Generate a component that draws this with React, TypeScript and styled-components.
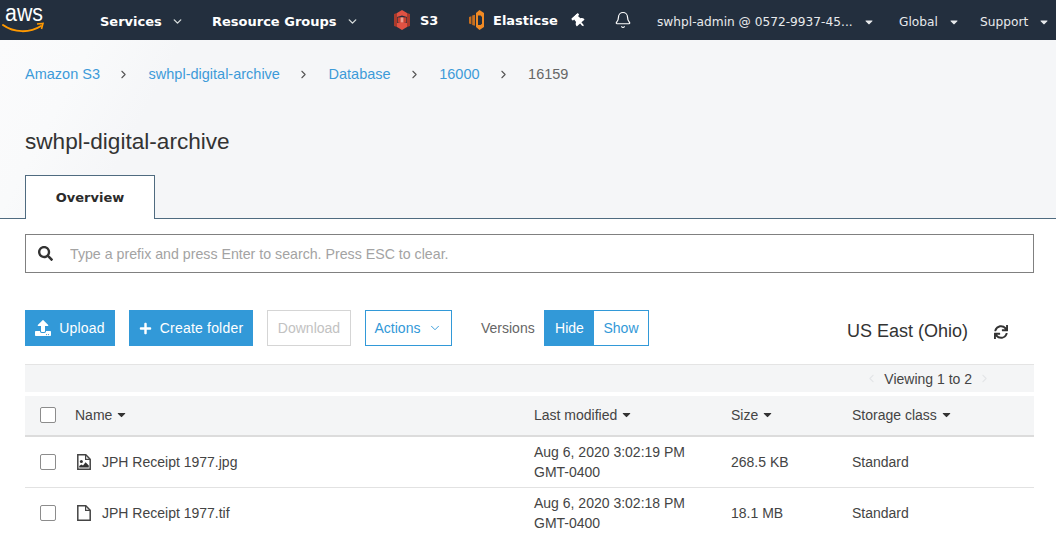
import styled, { createGlobalStyle } from "styled-components";
import { Bell, ChevronDown, ChevronLeft, ChevronRight } from "lucide-react";
import { FaCaretDown, FaPlus, FaSearch, FaSync, FaThumbtack, FaUpload } from "react-icons/fa";

const crumbs = ["Amazon S3", "swhpl-digital-archive", "Database", "16000"];

const files = [
    { name: "JPH Receipt 1977.jpg", date: "Aug 6, 2020 3:02:19 PM", size: "268.5 KB", image: true },
    { name: "JPH Receipt 1977.tif", date: "Aug 6, 2020 3:02:18 PM", size: "18.1 MB", image: false },
];

const FileIcon = ({ image }: { image: boolean }) => (
    <svg viewBox="0 0 14 16" width="14" height="16">
        <path d="M.8.8h8l4.4 4.4v10H.8z" fill="#fff" stroke="#444" strokeWidth="1.5" />
        <path d="M8.6 1v4.4h4.4" fill="none" stroke="#444" strokeWidth="1.2" />
        {image && (
            <>
                <circle cx="4.4" cy="7.4" r="1.5" fill="#333" />
                <path d="M2.2 13.6v-1.6l2.2-1.6 1.6 1 2.6-3.2 3.2 3.2v2.2z" fill="#333" />
            </>
        )}
    </svg>
);

const App = () => (
    <>
        <GlobalStyle />
        <Page>
            <Nav>
                <Logo>
                    <svg viewBox="0 0 56 34" width="56" height="34">
                        <text x="5" y="21" textLength="38" lengthAdjust="spacingAndGlyphs" fontFamily="'Liberation Sans', sans-serif" fontSize="23" fill="#fff">aws</text>
                        <path d="M3 25c11 8 27 8 38 1" fill="none" stroke="#f90" strokeWidth="2" strokeLinecap="round" />
                        <path d="M37 24l6-.5-1.5 5.5" fill="none" stroke="#f90" strokeWidth="1.6" />
                    </svg>
                </Logo>
                <NavMenu $width={112}>Services <ChevronDown size={13} strokeWidth={2.6} /></NavMenu>
                <NavMenu $width={178}>Resource Groups <ChevronDown size={13} strokeWidth={2.6} /></NavMenu>
                <Shortcut $width={78} $inset={4}>
                    <svg viewBox="0 0 16 20" width="16" height="20">
                        <path d="M0 4l3-1v14l-3-1zM16 4l-3-1v14l3-1z" fill="#a93a2b" />
                        <path d="M3 3l5-3 5 3v4L8 5.6 3 7zM3 13l5-1.4L13 13v4l-5 3-5-3z" fill="#e05243" />
                        <rect x="3.6" y="7.4" width="8.8" height="5" fill="#c9402f" />
                        <rect x="6.6" y="7.4" width="2.8" height="5" fill="#eb9c90" />
                    </svg>
                    S3
                </Shortcut>
                <Shortcut $width={104} $inset={1}>
                    <svg viewBox="0 0 15 20" width="15" height="20">
                        <path d="M0 7l2.4-.8v8L0 13.6zM3.2 5.6L6 4.8v11l-2.8-.8z" fill="#c96f1e" />
                        <path d="M7 3l3.5-3L15 3v14l-4.5 3L7 17z" fill="#f08a24" />
                        <path d="M9 5.5h2.6L13 7v6.4L11.6 15H9z" fill="#232f3e" />
                    </svg>
                    <ShortcutLabel>Elasticse</ShortcutLabel>
                </Shortcut>
                <PinSlot><FaThumbtack size={14} /></PinSlot>
                <BellSlot><Bell size={18} strokeWidth={1.6} /></BellSlot>
                <AccountMenu $width={242}>swhpl-admin @ 0572-9937-45... <FaCaretDown size={12} /></AccountMenu>
                <AccountMenu $width={81}>Global <FaCaretDown size={12} /></AccountMenu>
                <AccountMenu $width={76}>Support <FaCaretDown size={12} /></AccountMenu>
            </Nav>

            <Hero>
                <Breadcrumbs>
                    {crumbs.map(c => (
                        <Crumb key={c}>
                            <CrumbLink>{c}</CrumbLink>
                            <ChevronRight size={13} strokeWidth={2} />
                        </Crumb>
                    ))}
                    <CrumbCurrent>16159</CrumbCurrent>
                </Breadcrumbs>
                <Title>swhpl-digital-archive</Title>
                <Tab>Overview</Tab>
            </Hero>

            <Content>
                <SearchBox>
                    <FaSearch size={15} />
                    <SearchInput placeholder="Type a prefix and press Enter to search. Press ESC to clear." />
                </SearchBox>

                <Toolbar>
                    <PrimaryButton $width={90}><FaUpload size={16} /> Upload</PrimaryButton>
                    <PrimaryButton $width={124}><FaPlus size={13} /> Create folder</PrimaryButton>
                    <DisabledButton>Download</DisabledButton>
                    <OutlineButton>Actions <ChevronDown size={14} strokeWidth={1.6} /></OutlineButton>
                    <VersionsLabel>Versions</VersionsLabel>
                    <Toggle>
                        <ToggleItem $active>Hide</ToggleItem>
                        <ToggleItem>Show</ToggleItem>
                    </Toggle>
                    <Region>US East (Ohio)</Region>
                    <RefreshIcon><FaSync size={14} /></RefreshIcon>
                </Toolbar>

                <PagerBar>
                    <ChevronLeft size={13} color="#e4e6e8" />
                    <span>Viewing 1 to 2</span>
                    <ChevronRight size={13} color="#e4e6e8" />
                </PagerBar>

                <HeaderRow>
                    <CheckCell><Checkbox /></CheckCell>
                    <HeadCell>Name <FaCaretDown size={13} /></HeadCell>
                    <HeadCell>Last modified <FaCaretDown size={13} /></HeadCell>
                    <HeadCell>Size <FaCaretDown size={13} /></HeadCell>
                    <HeadCell>Storage class <FaCaretDown size={13} /></HeadCell>
                </HeaderRow>

                {files.map(f => (
                    <FileRow key={f.name}>
                        <CheckCell><Checkbox /></CheckCell>
                        <NameCell>
                            <FileIcon image={f.image} />
                            {f.name}
                        </NameCell>
                        <DateCell>{f.date}<br />GMT-0400</DateCell>
                        <div>{f.size}</div>
                        <div>Standard</div>
                    </FileRow>
                ))}
            </Content>
        </Page>
    </>
);

const GlobalStyle = createGlobalStyle`
    html, body { margin: 0; padding: 0; background: #fff; }
    * { box-sizing: border-box; }
`;

const Page = styled.div`
    width: 1056px; height: 544px; overflow: hidden;
    font-family: "Liberation Sans", Arial, sans-serif;
    font-size: 14px; color: #444;
`;

// ─── Nav ──────────────────────────────────────────────────────────────────────
const Nav = styled.div`
    display: flex; align-items: center;
    height: 40px; background: #232f3e; color: #fff;
    font-family: "DejaVu Sans", Verdana, sans-serif;
    white-space: nowrap;
`;
const Logo = styled.div`width: 100px; height: 40px; svg { display: block; }`;
const NavMenu = styled.div<{ $width: number }>`
    display: flex; align-items: center; gap: 9px;
    width: ${p => p.$width}px; padding-top: 2px;
    font-size: 13px; font-weight: 700;
    svg { color: #d5dbdb; }
`;
const Shortcut = styled.div<{ $width: number; $inset: number }>`
    display: flex; align-items: center; gap: 10px;
    width: ${p => p.$width}px; padding-left: ${p => p.$inset}px;
    font-size: 13px; font-weight: 700;
    svg { flex: none; }
`;
const ShortcutLabel = styled.span`margin-left: -1px;`;
const PinSlot = styled.div`display: flex; width: 42px; padding-top: 1px; svg { transform: rotate(-42deg); }`;
const BellSlot = styled.div`display: flex; width: 43px;`;
const AccountMenu = styled.div<{ $width: number }>`
    display: flex; align-items: center; gap: 10px;
    width: ${p => p.$width}px; padding-top: 3px;
    font-size: 12.2px; color: #e8eaec;
`;

// ─── Hero ─────────────────────────────────────────────────────────────────────
const Hero = styled.div`
    height: 179px; padding: 25px 0 0 25px;
    background: linear-gradient(118deg, #fbfbfc 0, #f9fafb 8%, #f5f6f8 16%);
    border-bottom: 1px solid #4f6b80;
`;
const Breadcrumbs = styled.div`display: flex; align-items: center; height: 18px; font-size: 14.5px;`;
const Crumb = styled.div`
    display: flex; align-items: center; gap: 17px; margin-right: 18.6px;
    svg { color: #555; }
`;
const CrumbLink = styled.span`color: #3d9bd9;`;
const CrumbCurrent = styled.span`color: #666;`;
const Title = styled.h1`margin: 43px 0 0; font-size: 22.6px; line-height: 32px; font-weight: 400; color: #333;`;
const Tab = styled.div`
    display: flex; align-items: center; justify-content: center;
    width: 130px; height: 44px; margin-top: 17px;
    background: #fff; color: #2b2b2b;
    border: 1px solid #4f6b80; border-bottom: none;
    font-family: "DejaVu Sans", Verdana, sans-serif;
    font-size: 13px; font-weight: 700;
    position: relative; z-index: 1;
`;

// ─── Content ──────────────────────────────────────────────────────────────────
const Content = styled.div`padding: 15px 22px 0 25px;`;
const SearchBox = styled.div`
    display: flex; align-items: center; gap: 17px;
    height: 39px; padding-left: 12px;
    border: 1px solid #808080; color: #333;
`;
const SearchInput = styled.input`
    flex: 1; border: none; outline: none; background: none;
    font: inherit; font-size: 14.2px; padding: 0;
    &::placeholder { color: #a3a3a3; opacity: 1; }
`;
const Toolbar = styled.div`display: flex; align-items: center; height: 36px; margin-top: 37px;`;
const PrimaryButton = styled.div<{ $width: number }>`
    display: flex; align-items: center; justify-content: center; gap: 8px;
    width: ${p => p.$width}px; height: 36px; margin-right: 14px;
    background: #3299d8; color: #fff; letter-spacing: 0.2px;
`;
const DisabledButton = styled.div`
    display: flex; align-items: center; justify-content: center;
    width: 84px; height: 36px; margin-right: 14px;
    border: 1px solid #d5d5d5; color: #c2c2c2;
`;
const OutlineButton = styled.div`
    display: flex; align-items: center; justify-content: center; gap: 8px;
    width: 87px; height: 36px; margin-right: 29px;
    border: 1px solid #3299d8; color: #3299d8;
`;
const VersionsLabel = styled.span`width: 63px; color: #666;`;
const Toggle = styled.div`display: flex; height: 36px; border: 1px solid #3299d8;`;
const ToggleItem = styled.div<{ $active?: boolean }>`
    display: flex; align-items: center; justify-content: center;
    width: ${p => p.$active ? 49 : 54}px;
    background: ${p => p.$active ? "#3299d8" : "#fff"};
    color: ${p => p.$active ? "#fff" : "#3299d8"};
`;
const Region = styled.span`margin-left: 198px; font-size: 18px; color: #333; position: relative; top: 3px;`;
const RefreshIcon = styled.div`display: flex; margin-left: 26px; color: #333; position: relative; top: 4px;`;
const PagerBar = styled.div`
    display: flex; align-items: center; justify-content: flex-end; gap: 6px;
    height: 28px; margin-top: 18px; padding: 0 43px 0 0;
    background: #f4f5f6; border-top: 1px solid #e4e4e4; color: #444;
`;
const gridColumns = "50px 459px 197px 121px 1fr";
const HeaderRow = styled.div`
    display: grid; grid-template-columns: ${gridColumns}; align-items: center;
    height: 41px; margin-top: 4px; padding-bottom: 2px;
    background: #f4f5f6; border-bottom: 2px solid #dcdcdc; color: #444;
`;
const HeadCell = styled.div`display: flex; align-items: center; gap: 3px; svg { color: #333; }`;
const CheckCell = styled.div`display: flex; padding-left: 15px;`;
const Checkbox = styled.span`
    display: block; width: 16px; height: 16px;
    background: #fff; border: 1px solid #8c8c8c; border-radius: 2px;
`;
const FileRow = styled.div`
    display: grid; grid-template-columns: ${gridColumns}; align-items: center;
    height: 51px; border-bottom: 1px solid #e2e2e2;
    &:last-child { border-bottom-color: transparent; }
`;
const NameCell = styled.div`display: flex; align-items: center; gap: 11px; padding-left: 2px;`;
const DateCell = styled.div`line-height: 20px;`;

export default App;
